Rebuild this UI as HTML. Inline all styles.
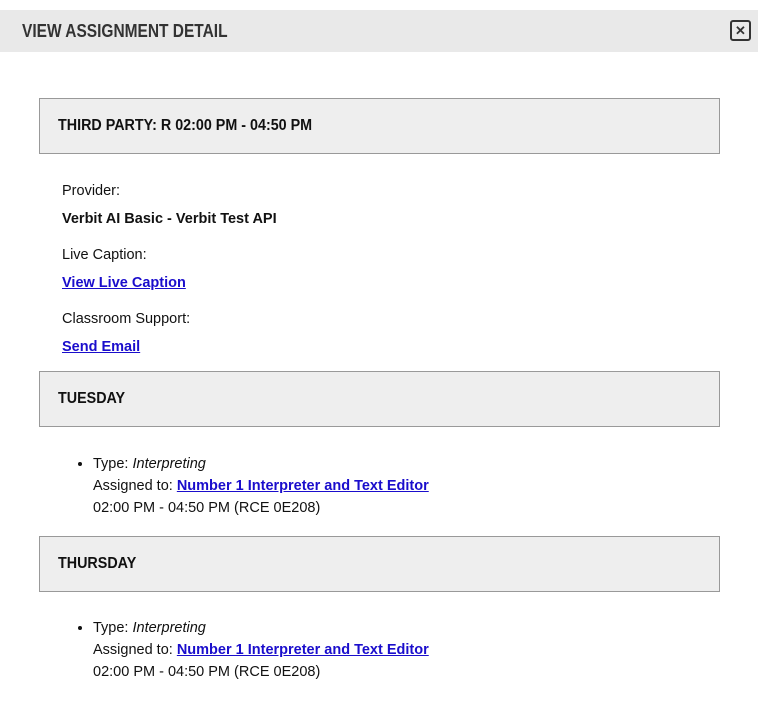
<!DOCTYPE html>
<html><head><style>
body{margin:0;width:767px;height:715px;background:#fff;font-family:"Liberation Sans",Arial,sans-serif;color:#111;position:relative;overflow:hidden}
.hdr{position:absolute;left:0;top:10px;width:758px;height:42px;background:#e9e9e9}
.cond{font-family:"Liberation Sans Narrow","Liberation Sans",sans-serif;font-weight:bold;display:inline-block;transform-origin:left center;white-space:nowrap}
.hdr .t{position:absolute;left:22px;top:11px;font-size:18px;color:#333;transform:scaleX(.86)}
.x{position:absolute;left:730px;top:10px;width:17px;height:17px;border:2px solid #333;border-radius:3px;font-size:13px;font-weight:bold;line-height:17px;text-align:center;color:#333}
.box{position:absolute;left:39px;width:679px;height:54px;background:#eee;border:1px solid #999}
.box span{position:absolute;left:18px;top:18px;font-size:16px;color:#111;transform:scaleX(.895)}
.p{position:absolute;left:62px;font-size:14.5px}
.b{font-weight:bold}
a{color:#1a0dcc;font-weight:bold;text-decoration:underline}
ul{position:absolute;left:55px;margin:0;padding-left:38px;font-size:14.5px;line-height:22px}
</style></head><body>
<div class="hdr"><span class="cond t">VIEW ASSIGNMENT DETAIL</span><div class="x">✕</div></div>
<div class="box" style="top:98px"><span class="cond">THIRD PARTY: R 02:00 PM - 04:50 PM</span></div>
<div class="p" style="top:183px">Provider:</div>
<div class="p b" style="top:211px">Verbit AI Basic - Verbit Test API</div>
<div class="p" style="top:247px">Live Caption:</div>
<div class="p" style="top:275px"><a>View Live Caption</a></div>
<div class="p" style="top:311px">Classroom Support:</div>
<div class="p" style="top:339px"><a>Send Email</a></div>
<div class="box" style="top:371px"><span class="cond">TUESDAY</span></div>
<ul style="top:453px"><li>Type: <i>Interpreting</i><br>Assigned to: <a>Number 1 Interpreter and Text Editor</a><br>02:00 PM - 04:50 PM (RCE 0E208)</li></ul>
<div class="box" style="top:536px"><span class="cond">THURSDAY</span></div>
<ul style="top:617px"><li>Type: <i>Interpreting</i><br>Assigned to: <a>Number 1 Interpreter and Text Editor</a><br>02:00 PM - 04:50 PM (RCE 0E208)</li></ul>
</body></html>
